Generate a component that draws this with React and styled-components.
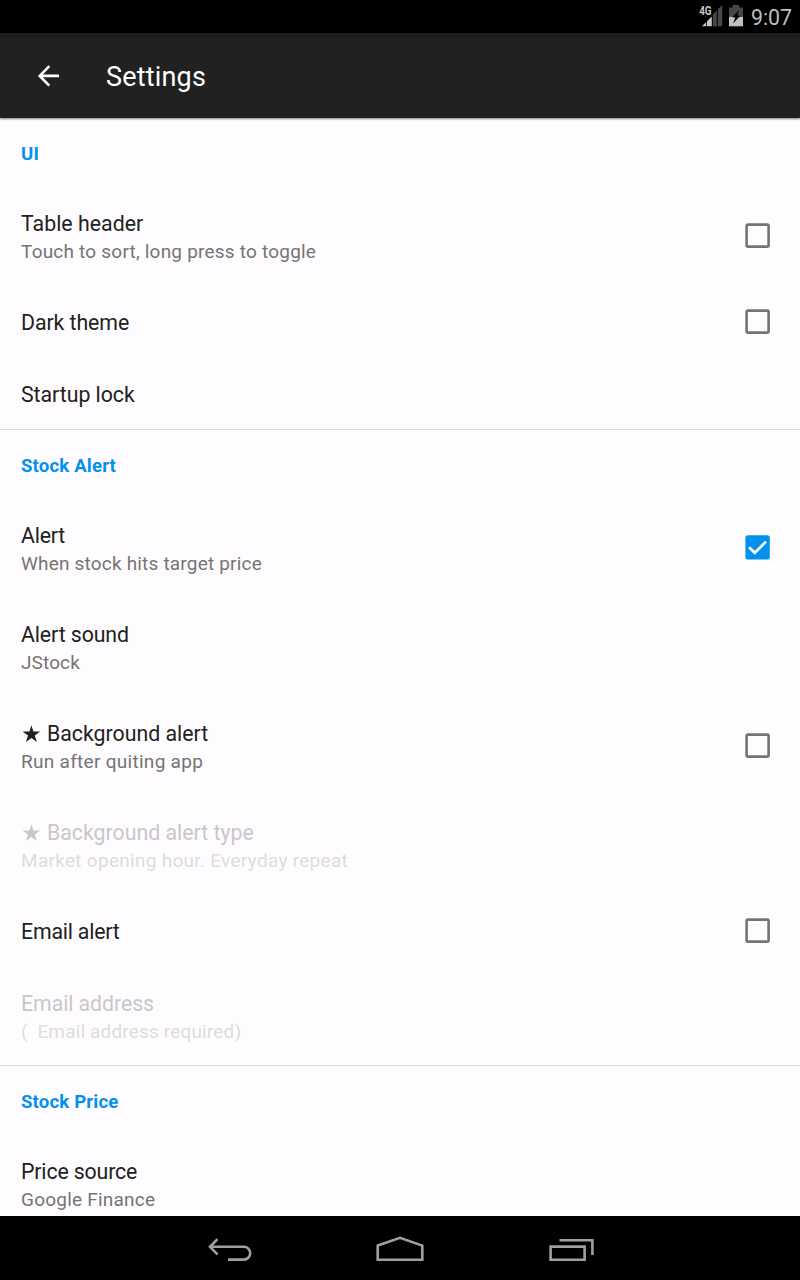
import React from "react";
import styled, { createGlobalStyle } from "styled-components";

const Global = createGlobalStyle`
  * { box-sizing: border-box; }
  body { margin: 0; background: #fffcff; font-family: Roboto, "Noto Sans", sans-serif; }
  svg { display: block; flex: none; }
`;

const Screen = styled.div`
  width: 800px;
  height: 1280px;
  display: flex;
  flex-direction: column;
  overflow: hidden;
  background: #fffcff;
`;

const StatusBar = styled.div`
  height: 33px;
  flex: none;
  display: flex;
  align-items: flex-start;
  justify-content: flex-end;
  background: #000;
`;

const Clock = styled.span`
  margin: 5px 8px 0 8px;
  font-size: 21.3px;
  line-height: 25px;
  color: #bebebe;
`;

const AppBar = styled.header`
  height: 85px;
  flex: none;
  display: flex;
  align-items: center;
  padding: 0 0 3px 32px;
  background: #212121;
  border-top: 5px solid #1a1e1d;
  box-shadow: 0 1px 2px rgba(0, 0, 0, 0.5);
  z-index: 1;
`;

const AppTitle = styled.h1`
  margin: 1px 0 0 42px;
  font-size: 27px;
  line-height: 32px;
  font-weight: 400;
  letter-spacing: 0.18px;
  color: #fff;
`;

const List = styled.main`
  flex: 1;
  min-height: 0;
  overflow: hidden;
`;

const Section = styled.section`
  & + & {
    margin-top: -2px;
    border-top: 1px solid #dcd9dc;
  }
`;

const SectionTitle = styled.h2`
  margin: 0;
  height: 70px;
  padding: 0 21px;
  font-size: 18.6px;
  line-height: 73px;
  font-weight: 700;
  letter-spacing: 0.16px;
  color: #0391ee;
`;

const Row = styled.div`
  height: ${(p) => (p.$tall ? 99 : 72)}px;
  display: flex;
  align-items: center;
  justify-content: space-between;
  padding: 0 26px 0 21px;
`;

const RowTitle = styled.div`
  font-size: 21.3px;
  line-height: 28px;
  white-space: pre;
  letter-spacing: ${(p) => p.$tracking}px;
  color: ${(p) => (p.$disabled ? "#c9c7c9" : "#212121")};
`;

const RowSummary = styled.div`
  font-size: 19px;
  line-height: 27px;
  white-space: pre;
  letter-spacing: ${(p) => p.$tracking}px;
  color: ${(p) => (p.$disabled ? "#dedcde" : "#757475")};
`;

const CheckSlot = styled.div`
  margin-bottom: ${(p) => (p.$tall ? 5 : 3)}px;
`;

const NavBar = styled.nav`
  height: 64px;
  flex: none;
  display: flex;
  padding-left: 208px;
  gap: 124px;
  background: #000;
`;

const Star = () => (
  <svg width="21" height="20" viewBox="0 0 21 20" fill="currentColor">
    <path d="M10.4 1.2L12.4 7.4H19.2L13.8 11.4L15.9 18L10.4 13.9L4.9 18L7 11.4L1.6 7.4H8.4Z" />
  </svg>
);

const Starred = styled.span`
  display: flex;
  align-items: center;
  gap: 5px;
`;

const Checkbox = ({ checked, tall }) => (
  <CheckSlot $tall={tall}>
    <svg width="33" height="33" viewBox="0 0 33 33">
      {checked ? (
        <>
          <rect x="4.4" y="4.2" width="24.4" height="24.4" rx="2.6" fill="#0391ee" />
          <path d="M8 16.2L13.8 21.8L25 10.6" fill="none" stroke="#fff" strokeWidth="2.7" />
        </>
      ) : (
        <rect x="5.6" y="5.6" width="22" height="22" rx="1.4" fill="none" stroke="#757375" strokeWidth="2.6" />
      )}
    </svg>
  </CheckSlot>
);

const SignalIcon = () => (
  <svg width="30" height="33" viewBox="698 0 30 33">
    <path d="M712.8 14.4L716.8 10.4V26.3H712.8ZM717.8 9.3L722.2 4.9V26.3H717.8Z" fill="#464846" />
    <path d="M702 26.3L706.2 22V26.3ZM707 21.2L711.8 16.4V26.3H707Z" fill="#c6c8c6" />
    <text x="699.2" y="15.3" fontSize="12.6" fontWeight="700" fill="#c6c8c6" textLength="12.4" lengthAdjust="spacingAndGlyphs">4G</text>
  </svg>
);

const BatteryIcon = () => (
  <svg width="15" height="33" viewBox="728 0 15 33">
    <path d="M732.6 5H739.2V7.4H743V16.8H729V7.4H732.6Z" fill="#464846" />
    <path d="M729 16.8H743V26.3H729Z" fill="#c0c2c0" />
    <path d="M739.6 9.6L732.2 17.2L735.4 17.6L733 23.4L740.4 15.8L737.2 15.2Z" fill="#000" />
  </svg>
);

const NavIcon = styled.svg`
  fill: none;
  stroke: #a0a0a0;
  stroke-width: 2.6px;
`;

const sections = [
  {
    title: "UI",
    rows: [
      { title: "Table header", summary: "Touch to sort, long press to toggle", check: false, tracking: 0.03, subTracking: 0.21 },
      { title: "Dark theme", check: false, tracking: -0.07 },
      { title: "Startup lock", tracking: -0.04 },
    ],
  },
  {
    title: "Stock Alert",
    rows: [
      { title: "Alert", summary: "When stock hits target price", check: true, tracking: -0.2, subTracking: 0.19 },
      { title: "Alert sound", summary: "JStock", tracking: -0.1, subTracking: 0.12 },
      { title: "Background alert", star: true, summary: "Run after quiting app", check: false, subTracking: 0.29 },
      { title: "Background alert type", star: true, summary: "Market opening hour. Everyday repeat", disabled: true, subTracking: 0.29 },
      { title: "Email alert", check: false, tracking: -0.2 },
      { title: "Email address", summary: "(  Email address required)", disabled: true, tracking: -0.07, subTracking: 0.16 },
    ],
  },
  { title: "Stock Price", rows: [{ title: "Price source", summary: "Google Finance", tracking: -0.14 }] },
];

const SettingRow = ({ title, summary, check, star, disabled, tracking = 0, subTracking = 0.22 }) => (
  <Row $tall={!!summary}>
    <div>
      <RowTitle $disabled={disabled} $tracking={tracking}>
        {star ? <Starred><Star />{title}</Starred> : title}
      </RowTitle>
      {summary && <RowSummary $disabled={disabled} $tracking={subTracking}>{summary}</RowSummary>}
    </div>
    {check !== undefined && <Checkbox checked={check} tall={!!summary} />}
  </Row>
);

export default function App() {
  return (
    <Screen>
      <Global />
      <StatusBar>
        <SignalIcon />
        <BatteryIcon />
        <Clock>9:07</Clock>
      </StatusBar>
      <AppBar>
        <svg width="32" height="32" viewBox="0 0 32 32" fill="none" stroke="#fff" strokeWidth="2.6">
          <path d="M27 14.9H8M17.3 5.2L7.7 14.9L17.3 24.6" />
        </svg>
        <AppTitle>Settings</AppTitle>
      </AppBar>
      <List>
        {sections.map((s) => (
          <Section key={s.title}>
            <SectionTitle>{s.title}</SectionTitle>
            {s.rows.map((r) => <SettingRow key={r.title} {...r} />)}
          </Section>
        ))}
      </List>
      <NavBar>
        <NavIcon width="44" height="64" viewBox="208 1216 44 64">
          <path d="M217.5 1239.2L210 1246.8L217.5 1254.4M210 1246.8H243.8A6.4 6.4 0 0 1 243.8 1259.6H228" />
        </NavIcon>
        <NavIcon width="48" height="64" viewBox="376 1216 48 64">
          <path d="M377.7 1245.6L400 1237.8L422.3 1245.6V1259.7H377.7Z" />
        </NavIcon>
        <NavIcon width="46" height="64" viewBox="548 1216 46 64">
          <path d="M550.6 1246.6H584.6V1259.7H550.6ZM559.5 1240.2H592.4V1255" />
        </NavIcon>
      </NavBar>
    </Screen>
  );
}
